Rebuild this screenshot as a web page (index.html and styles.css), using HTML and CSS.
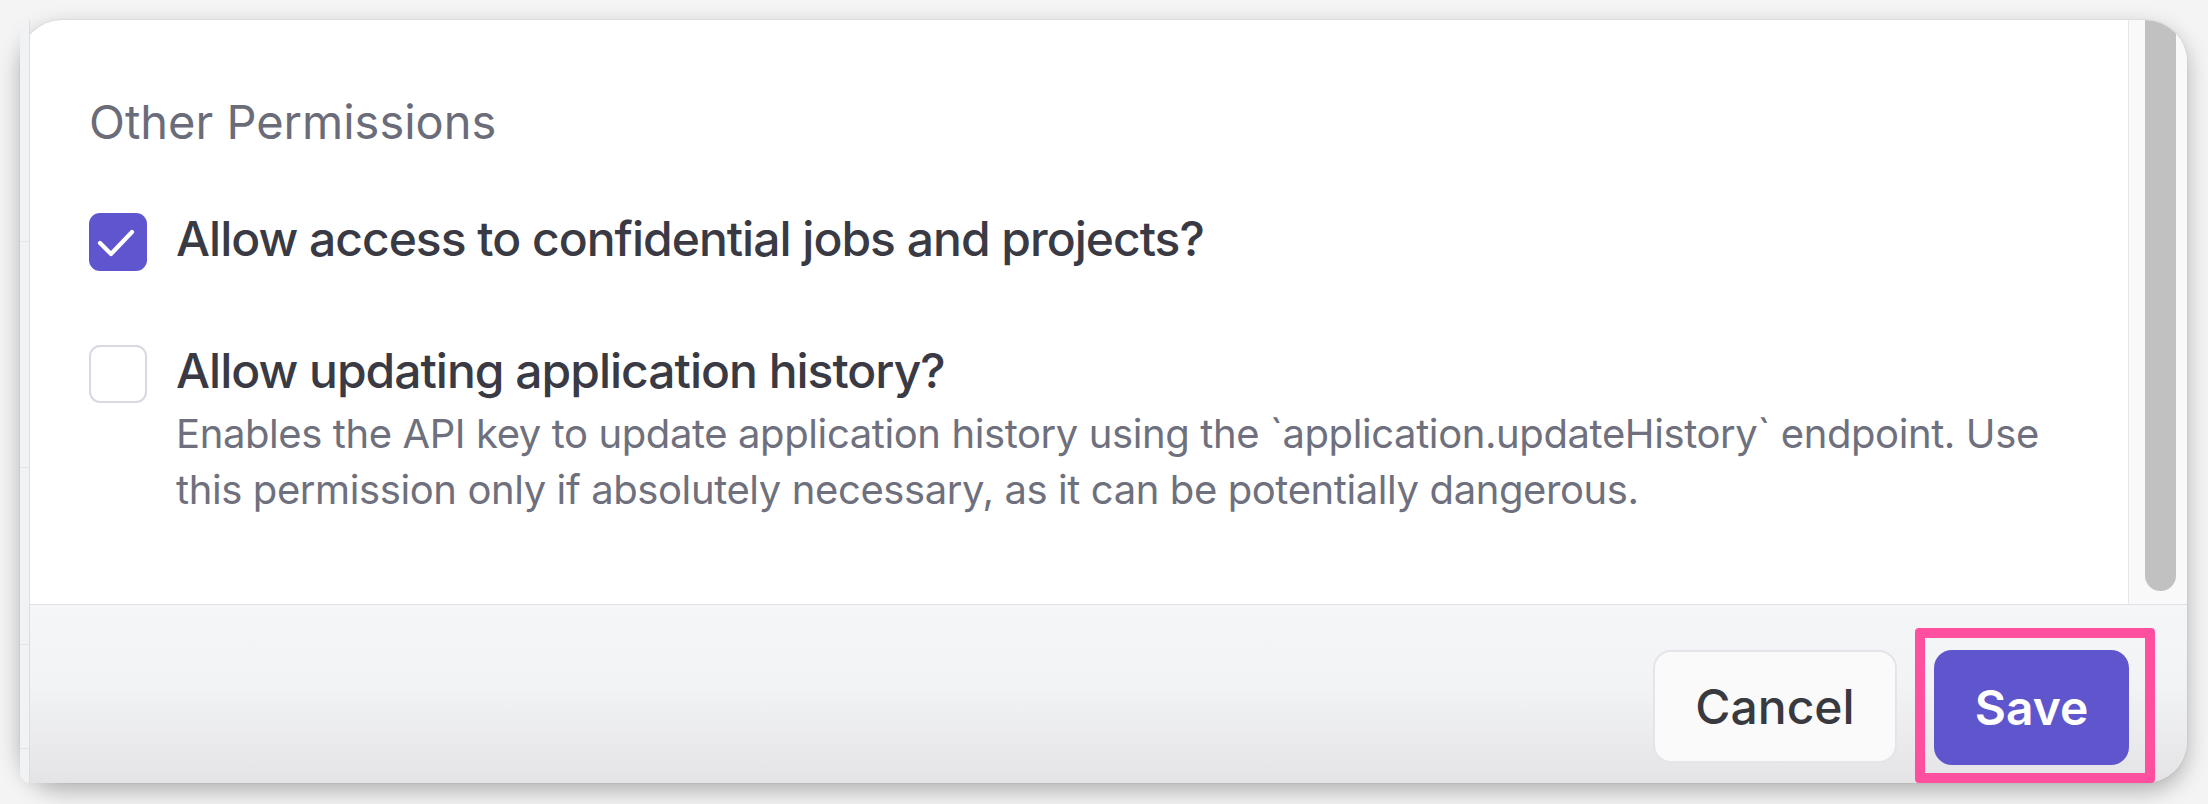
FILE: index.html
```html
<!DOCTYPE html>
<html lang="en">
<head>
<meta charset="utf-8">
<title>Other Permissions</title>
<link rel="stylesheet" href="styles.css">
</head>
<body>
<div class="stage">
  <div class="card">
    <div class="strip">
      <div class="strip-cell c1"></div>
      <div class="strip-cell c2"></div>
      <div class="strip-cell c3"></div>
      <div class="strip-cell c4"></div>
      <div class="strip-cell c5"></div>
    </div>
    <div class="main">
      <div class="body-row">
        <div class="content">
          <h2 class="heading">Other Permissions</h2>
          <div class="option option-first">
            <span class="box box-checked">
              <svg viewBox="0 0 58 58" width="58" height="58"><polyline points="11,30 22,41 43,19" fill="none" stroke="#ffffff" stroke-width="4.2" stroke-linecap="round" stroke-linejoin="round"/></svg>
            </span>
            <div class="option-text">
              <div class="option-title">Allow access to confidential jobs and projects?</div>
            </div>
          </div>
          <div class="option option-second">
            <span class="box"></span>
            <div class="option-text">
              <div class="option-title">Allow updating application history?</div>
              <p class="option-desc">Enables the API key to update application history using the `application.updateHistory` endpoint. Use this permission only if absolutely necessary, as it can be potentially dangerous.</p>
            </div>
          </div>
        </div>
        <div class="track"><div class="thumb"></div></div>
      </div>
      <div class="footer">
        <button class="btn btn-cancel" type="button">Cancel</button>
        <div class="save-wrap">
          <button class="btn btn-save" type="button">Save</button>
          <span class="highlight"></span>
        </div>
      </div>
    </div>
  </div>
</div>
</body>
</html>
```
FILE: styles.css
```css
* { box-sizing: border-box; }
html, body { margin: 0; padding: 0; }
body {
  width: 2208px;
  height: 804px;
  background: #f4f4f4;
  font-family: "Inter", "Noto Sans", sans-serif;
  overflow: hidden;
}
.stage {
  padding: 20px 21px 21px 20px;
  height: 804px;
}
.card {
  display: flex;
  height: 763px;
  border-radius: 42px;
  background: #ffffff;
  box-shadow: 0 8px 22px rgba(0, 0, 0, 0.28), 0 0 2px rgba(0, 0, 0, 0.12);
}
.strip {
  width: 10px;
  flex: none;
  display: flex;
  flex-direction: column;
  background: #f1f2f4;
  border-right: 1px solid #dcdde3;
  border-radius: 42px 0 0 42px;
  overflow: hidden;
}
.strip-cell { border-bottom: 1px solid #e3e4e8; }
.c1 { height: 222px; }
.c2 { height: 226px; }
.c3 { height: 177px; }
.c4 { height: 104px; }
.c5 { flex: 1; border-bottom: 0; }
.main {
  flex: 1;
  display: flex;
  flex-direction: column;
  min-width: 0;
}
.body-row {
  display: flex;
  height: 584px;
  flex: none;
}
.content {
  flex: 1;
  padding: 74px 40px 0 59px;
}
.heading {
  margin: 0;
  font-size: 47px;
  line-height: 56px;
  font-weight: 400;
  color: #6b6c79;
}
.option {
  display: flex;
  align-items: flex-start;
  gap: 29px;
}
.option-first { margin-top: 60px; }
.option-second { margin-top: 71px; }
.box {
  width: 58px;
  height: 58px;
  flex: none;
  border-radius: 11px;
  border: 2px solid #d9d8e4;
  background: #ffffff;
  margin-top: 3px;
}
.box-checked {
  border: 0;
  background: #5f56cf;
  display: flex;
}
.option-title {
  font-size: 48px;
  line-height: 58px;
  font-weight: 500;
  letter-spacing: -1px;
  color: #3a3a44;
}
.option-desc {
  margin: 6px 0 0;
  font-size: 40px;
  line-height: 56px;
  letter-spacing: -0.4px;
  color: #6f707d;
}
.track {
  width: 59px;
  flex: none;
  background: #f9f9f9;
  border-left: 1px solid #e6e6e8;
  border-top-right-radius: 42px;
  overflow: hidden;
  padding: 0 11px 0 16px;
}
.thumb {
  width: 31px;
  height: 571px;
  background: #c1c1c1;
  border-radius: 0 0 16px 16px;
}
.footer {
  flex: 1;
  display: flex;
  justify-content: flex-end;
  align-items: flex-start;
  gap: 37px;
  padding: 45px 58px 0 0;
  border-top: 1px solid #dfe0e6;
  background: linear-gradient(to bottom, #f5f6f8 0%, #f2f3f5 45%, #e4e4e6 100%);
  border-bottom-right-radius: 42px;
}
.btn {
  font-family: "Inter", "Noto Sans", sans-serif;
  font-size: 48px;
  font-weight: 500;
  border-radius: 18px;
  cursor: pointer;
  padding: 0;
}
.btn-cancel {
  width: 244px;
  height: 113px;
  background: #fafafb;
  border: 2px solid #e4e4ea;
  color: #393940;
}
.save-wrap {
  position: relative;
}
.btn-save {
  width: 195px;
  height: 115px;
  background: #5f55cd;
  border: 0;
  color: #ffffff;
  font-weight: 600;
}
.highlight {
  position: absolute;
  top: -22px;
  left: -19px;
  right: -26px;
  bottom: -18px;
  border: 10px solid #ff4f9f;
  border-radius: 4px;
  pointer-events: none;
}
```
